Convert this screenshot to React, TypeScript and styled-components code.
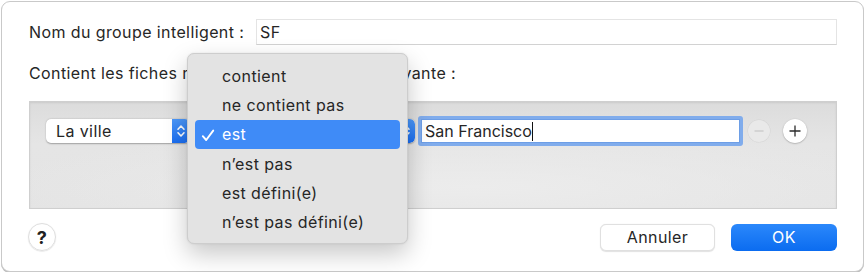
import styled, { createGlobalStyle } from 'styled-components';

const GlobalStyle = createGlobalStyle`
  html, body {
    margin: 0;
    padding: 0;
    background: #ffffff;
  }
  body {
    font-family: Inter, "Liberation Sans", sans-serif;
    color: #262626;
    letter-spacing: 0.4px;
  }
`;

const options = [
  'contient',
  'ne contient pas',
  'est',
  'n’est pas',
  'est défini(e)',
  'n’est pas défini(e)',
];

const Stepper = () => (
  <StepperBox>
    <svg width="10" height="16" viewBox="0 0 10 16">
      <path d="M2 6.2 L5 3 L8 6.2" fill="none" stroke="#fff" strokeWidth="1.6" strokeLinecap="round" strokeLinejoin="round" />
      <path d="M2 9.8 L5 13 L8 9.8" fill="none" stroke="#fff" strokeWidth="1.6" strokeLinecap="round" strokeLinejoin="round" />
    </svg>
  </StepperBox>
);

const App = () => {
  return (
    <>
      <GlobalStyle />
      <Window>
        <NameRow>
          <Label>Nom du groupe intelligent :</Label>
          <NameField>SF</NameField>
        </NameRow>
        <Description>Contient les fiches répondant à la condition suivante :</Description>
        <RulePanel>
          <RuleRow>
            <PopupButton width={144}>
              <PopupLabel>La ville</PopupLabel>
              <Stepper />
            </PopupButton>
            <PopupButton width={215}>
              <PopupLabel />
              <Stepper />
            </PopupButton>
            <ValueField>
              <span>San Francisco</span>
              <Caret />
            </ValueField>
            <RoundButton disabled>
              <svg width="12" height="12" viewBox="0 0 12 12">
                <path d="M1.5 6 H10.5" stroke="#c9c9c9" strokeWidth="1.3" />
              </svg>
            </RoundButton>
            <RoundButton>
              <svg width="14" height="14" viewBox="0 0 14 14">
                <path d="M1.5 7 H12.5 M7 1.5 V12.5" stroke="#2b2b2b" strokeWidth="1.3" />
              </svg>
            </RoundButton>
          </RuleRow>
        </RulePanel>
        <Footer>
          <HelpButton>?</HelpButton>
          <Buttons>
            <CancelButton>Annuler</CancelButton>
            <OkButton>OK</OkButton>
          </Buttons>
        </Footer>
        <Menu>
          {options.map((o) => (
            <MenuItem key={o} selected={o === 'est'}>
              {o === 'est' && (
                <Check width="14" height="13" viewBox="0 0 14 13">
                  <path d="M1.8 7.2 L5.2 11 L12.2 1.6" fill="none" stroke="#fff" strokeWidth="1.9" strokeLinecap="round" strokeLinejoin="round" />
                </Check>
              )}
              {o}
            </MenuItem>
          ))}
        </Menu>
      </Window>
    </>
  );
};

const Window = styled.div`
  position: relative;
  box-sizing: border-box;
  width: 863px;
  height: 271px;
  margin: 1px 0 0 1px;
  border: 1px solid #c9c9c9;
  border-radius: 9px;
  box-shadow: 0 1px 0 #bdbdbd;
  background: #ffffff;
  padding: 17px 26px 0 27px;
  display: flex;
  flex-direction: column;
  font-size: 16px;
`;

const NameRow = styled.div`
  display: flex;
  align-items: center;
  height: 26px;
  gap: 10px;
`;

const Label = styled.div`
  width: 217px;
  white-space: nowrap;
`;

const NameField = styled.div`
  flex: 1;
  box-sizing: border-box;
  height: 26px;
  border: 1px solid #e4e4e4;
  border-bottom-color: #d2d2d2;
  padding: 0 3px;
  display: flex;
  align-items: center;
`;

const Description = styled.div`
  margin-top: 19px;
  height: 18px;
  line-height: 18px;
  white-space: nowrap;
`;

const RulePanel = styled.div`
  margin-top: 19px;
  box-sizing: border-box;
  height: 108px;
  border: 1px solid #cfcfcf;
  background: radial-gradient(ellipse 60% 55% at 55% 80%, #ececec 0%, rgba(236,236,236,0) 100%),
    linear-gradient(#dcdcdc, #e5e5e5 40%, #e4e4e4);
  box-shadow: inset 0 1px 2px rgba(0, 0, 0, 0.08);
  padding: 14px 0 0 16px;
`;

const RuleRow = styled.div`
  display: flex;
  align-items: center;
  height: 30px;
`;

const PopupButton = styled.div<{ width: number }>`
  box-sizing: border-box;
  width: ${(p) => p.width}px;
  height: 24px;
  margin-right: ${(p) => (p.width > 200 ? 3 : 10)}px;
  background: #ffffff;
  border-radius: 5px;
  box-shadow: 0 0.5px 1.5px rgba(0, 0, 0, 0.3);
  display: flex;
  align-items: center;
  justify-content: space-between;
  padding-left: 10px;
  overflow: hidden;
`;

const PopupLabel = styled.span`
  white-space: nowrap;
`;

const StepperBox = styled.div`
  width: 18px;
  height: 24px;
  background: linear-gradient(#4c98fa, #1a6ef2);
  border-radius: 0 5px 5px 0;
  display: flex;
  align-items: center;
  justify-content: center;
`;

const ValueField = styled.div`
  box-sizing: border-box;
  width: 325px;
  height: 30px;
  border: 3px solid #80acec;
  border-radius: 3px;
  background: #fff;
  box-shadow: inset 0 0 0 1px #6d9ee6;
  display: flex;
  align-items: center;
  padding-left: 4px;
  margin-right: 5px;
  letter-spacing: 0;
`;

const Caret = styled.span`
  display: inline-block;
  width: 1px;
  height: 19px;
  background: #111;
  margin-left: 0;
`;

const RoundButton = styled.div<{ disabled?: boolean }>`
  width: ${(p) => (p.disabled ? 22 : 24)}px;
  height: ${(p) => (p.disabled ? 22 : 24)}px;
  border-radius: 50%;
  margin-right: 13px;
  background: ${(p) => (p.disabled ? '#e9e9e9' : '#ffffff')};
  box-shadow: ${(p) => (p.disabled ? '0 0 0 0.5px rgba(0,0,0,0.06)' : '0 0.5px 1.5px rgba(0,0,0,0.35)')};
  display: flex;
  align-items: center;
  justify-content: center;
`;

const Footer = styled.div`
  margin-top: 14px;
  display: flex;
  align-items: center;
  justify-content: space-between;
  height: 28px;
`;

const HelpButton = styled.div`
  box-sizing: border-box;
  width: 28px;
  height: 28px;
  border-radius: 50%;
  border: 1px solid #dedede;
  box-shadow: 0 0.5px 1px rgba(0, 0, 0, 0.15);
  display: flex;
  align-items: center;
  justify-content: center;
  font-size: 18px;
  font-weight: 700;
  color: #222;
  margin-left: -1px;
`;

const Buttons = styled.div`
  display: flex;
  gap: 16px;
`;

const CancelButton = styled.div`
  box-sizing: border-box;
  width: 115px;
  height: 27px;
  border-radius: 6px;
  background: #ffffff;
  border: 1px solid #e0e0e0;
  box-shadow: 0 0.5px 1px rgba(0, 0, 0, 0.12);
  display: flex;
  align-items: center;
  justify-content: center;
`;

const OkButton = styled.div`
  box-sizing: border-box;
  width: 106px;
  height: 27px;
  border-radius: 6px;
  background: linear-gradient(#2b88fb, #0b6cf0);
  color: #ffffff;
  display: flex;
  align-items: center;
  justify-content: center;
`;

const Menu = styled.div`
  position: absolute;
  left: 185px;
  top: 51px;
  box-sizing: border-box;
  width: 221px;
  height: 191px;
  padding: 7px 7px;
  background: #e3e3e3;
  border: 1px solid #cdcdcd;
  border-radius: 7px;
  box-shadow: 0 10px 24px rgba(0, 0, 0, 0.22), 0 0 2px rgba(0, 0, 0, 0.1);
`;

const MenuItem = styled.div<{ selected?: boolean }>`
  position: relative;
  height: 29.3px;
  display: flex;
  align-items: center;
  padding-left: 27px;
  border-radius: 4px;
  white-space: nowrap;
  background: ${(p) => (p.selected ? '#3f8bf7' : 'transparent')};
  color: ${(p) => (p.selected ? '#ffffff' : '#262626')};
`;

const Check = styled.svg`
  position: absolute;
  left: 6px;
  top: 9px;
`;

export default App;
